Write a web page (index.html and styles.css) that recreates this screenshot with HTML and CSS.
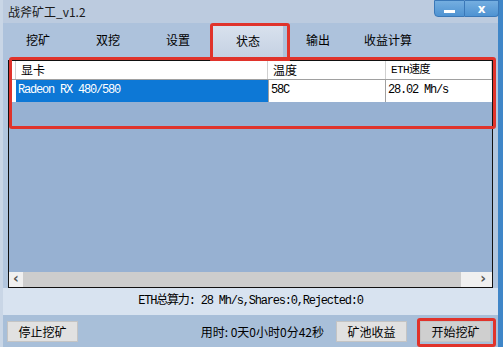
FILE: index.html
```html
<!DOCTYPE html>
<html>
<head>
<meta charset="utf-8">
<link rel="stylesheet" href="styles.css">
</head>
<body>
<div class="window">
  <div class="titlebar">
    <span class="title">战斧矿工_v1.2</span>
    <div class="controls">
      <div class="ctl min"><span class="minbar"></span></div>
      <div class="ctl close">x</div>
    </div>
  </div>
  <div class="tabs">
    <div class="tab">挖矿</div>
    <div class="tab">双挖</div>
    <div class="tab">设置</div>
    <div class="tab active">状态</div>
    <div class="tab">输出</div>
    <div class="tab">收益计算</div>
    <div class="mark mark-tab"></div>
  </div>
  <div class="listview">
    <div class="grid">
      <div class="row head">
        <div class="cell c0"></div>
        <div class="cell c1">显卡</div>
        <div class="cell c2">温度</div>
        <div class="cell c3 mono-h">ETH速度</div>
      </div>
      <div class="row data">
        <div class="cell c0"></div>
        <div class="cell c1 sel mono">Radeon RX 480/580</div>
        <div class="cell c2 mono">58C</div>
        <div class="cell c3 mono">28.02 Mh/s</div>
      </div>
      <div class="mark mark-table"></div>
    </div>
    <div class="empty"></div>
    <div class="hscroll">
      <div class="sbtn left">&#8249;</div>
      <div class="track"></div>
      <div class="sbtn right">&#8250;</div>
    </div>
  </div>
  <div class="status mono">ETH总算力: 28 Mh/s,Shares:0,Rejected:0</div>
  <div class="bottom">
    <div class="btn">停止挖矿</div>
    <div class="spacer"></div>
    <div class="elapsed">用时: 0天0小时0分42秒</div>
    <div class="btn">矿池收益</div>
    <div class="btn start">开始挖矿<div class="mark mark-btn"></div></div>
  </div>
</div>
</body>
</html>
```
FILE: styles.css
```css
* { box-sizing: border-box; }
html, body { margin: 0; padding: 0; }
body {
  width: 503px; height: 347px; overflow: hidden;
  font-family: "Noto Sans CJK SC", "Liberation Sans", sans-serif;
  font-size: 12px; color: #000;
}
.window {
  width: 503px; height: 347px;
  background: #b2c6de;
  display: flex; flex-direction: column;
  border-left: 3px solid #c9d6e6;
  border-right: 5px solid #3f86c8;
  position: relative;
}
.titlebar {
  height: 23px; display: flex; align-items: flex-start;
  background: #bccbdf;
}
.title { padding: 3px 0 0 5px; font-size: 12px; line-height: 18px; color: #1a1a1a; }
.controls { margin-left: auto; display: flex; margin-right: -1px; }
.ctl {
  height: 17px; background: linear-gradient(#74aee0, #4f93d2);
  border: 1px solid #3a78b8; color: #fff; display: flex;
  align-items: center; justify-content: center;
}
.min { width: 31px; border-radius: 0 0 0 4px; }
.close { width: 34px; border-radius: 0 0 4px 0; font-weight: bold; font-family: "DejaVu Sans", sans-serif; font-size: 12px; line-height: 12px; border-left: none; }
.minbar { width: 11px; height: 3px; background: #fff; margin-top: 5px; }
.tabs {
  height: 37px; display: flex; position: relative;
  background: #adc2dc; padding-top: 2px;
}
.tab {
  width: 70px; text-align: center; line-height: 30px; font-size: 12px;
}
.tab.active {
  background: linear-gradient(#d8e1ed, #c3d0e2);
  margin-top: 1px;
}
.listview {
  margin: 0 5px 0 5px; border: 1px solid #111;
  height: 228px; display: flex; flex-direction: column;
  background: #97b1d2;
}
.grid { position: relative; }
.row { display: flex; }
.head { height: 19px; background: #fff; border-bottom: 1px solid #a0a0a0; }
.data { height: 22px; background: #fff; }
.cell { font-size: 12px; line-height: 18px; padding-left: 5px; white-space: nowrap; }
.head .cell { border-right: 1px solid #d0d0d0; }
.data .cell { line-height: 21px; padding-left: 2px; }
.c0 { width: 7px; padding: 0; }
.c1 { width: 252px; }
.c2 { width: 118px; }
.c3 { flex: 1; border-right: none; }
.data .c2 { border-right: 1px solid #a0a0a0; border-left: 1px solid #a0a0a0; }
.sel { background: #0d78d6; color: #fff; }
.mono { font-family: "Liberation Mono", "Noto Sans CJK SC", monospace; font-size: 12px; letter-spacing: -1.2px; }
.data .mono { font-size: 12px; }
.mono-h { font-family: "Liberation Mono", "Noto Sans CJK SC", monospace; font-size: 11px; letter-spacing: -0.6px; }
.empty { flex: 1; }
.hscroll { height: 15px; display: flex; background: #cdcdcd; }
.sbtn { width: 14px; background: #f0f0f0; color: #555; font-weight: bold; font-size: 14px; line-height: 13px; text-align: center; font-family: "DejaVu Sans", sans-serif; }
.sbtn.right { width: 31px; text-align: right; padding-right: 6px; }
.track { flex: 1; }
.status {
  height: 27px; background: #d8e3f0; text-align: center; line-height: 27px;
}
.bottom {
  flex: 1; display: flex; align-items: center; padding: 0 7px 0 4px;
  background: #a8bfd9; gap: 0;
}
.btn {
  width: 71px; height: 21px; background: #e1e1e1; border: 1px solid #c4c4c4;
  text-align: center; line-height: 19px; font-size: 12px; position: relative;
}
.spacer { flex: 1; }
.elapsed { font-size: 12px; margin-right: 12px; }
.start { margin-left: 13px; background: #cfcfcf; }
.mark {
  position: absolute; border: 3px solid #e0332b; border-radius: 3px; pointer-events: none;
}
.mark-tab { left: 207px; top: 0; width: 80px; height: 40px; }
.mark-table { left: 0; top: -4px; width: 487px; height: 72px; }
.mark-btn { left: -4px; top: -4px; width: 79px; height: 29px; }
```
